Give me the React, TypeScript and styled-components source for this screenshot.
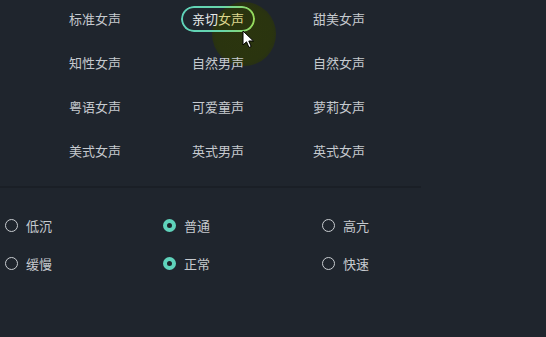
import React from 'react'
import styled, { createGlobalStyle } from 'styled-components'

const GlobalStyle = createGlobalStyle`
  html, body {
    margin: 0;
    padding: 0;
    background: #1f252d;
  }
  body {
    font-family: "Noto Sans CJK SC", "Noto Sans", sans-serif;
    -webkit-font-smoothing: antialiased;
  }
`

const Page = styled.div`
  position: relative;
  width: 546px;
  height: 337px;
  overflow: hidden;
  background: #1f252d;
`

const VoiceGrid = styled.div`
  display: grid;
  grid-template-columns: 123px 121px 122px;
  grid-auto-rows: 44px;
  padding-left: 69px;
  margin-top: -3px;
`

const VoiceCell = styled.div`
  display: flex;
  align-items: center;
`

const VoiceItem = styled.div<{ active?: boolean }>`
  position: relative;
  z-index: 1;
  font-size: 13px;
  line-height: 18px;
  color: #c6cacf;
  white-space: nowrap;
  ${p => p.active && `
    margin-left: -11px;
    padding: 4px 11px;
    color: #e6e9ea;
    &::before {
      content: '';
      position: absolute;
      inset: 0;
      border-radius: 13px;
      padding: 2px;
      background: linear-gradient(90deg, #5fd3bb, #68d6ab 55%, #98da58);
      -webkit-mask: linear-gradient(#000 0 0) content-box, linear-gradient(#000 0 0);
      -webkit-mask-composite: xor;
      mask-composite: exclude;
    }
  `}
`

const Warm = styled.span`
  color: #dcd68e;
`

const Divider = styled.div`
  width: 421px;
  height: 2px;
  margin-top: 13px;
  background: #1a1f26;
`

const RadioGrid = styled.div`
  display: grid;
  grid-template-columns: 158px 159px 160px;
  grid-auto-rows: 38px;
  padding-left: 5px;
  margin-top: 18px;
`

const RadioOption = styled.label`
  display: flex;
  align-items: center;
  gap: 8px;
  font-size: 13px;
  color: #c6cacf;
`

const RadioDot = styled.span<{ checked?: boolean }>`
  box-sizing: border-box;
  width: 13px;
  height: 13px;
  border-radius: 50%;
  border: ${p => (p.checked ? '4px solid #5fd3bb' : '1.5px solid #c9cdd1')};
  background: ${p => (p.checked ? '#1c2228' : 'transparent')};
`

const Halo = styled.div`
  position: absolute;
  left: 212px;
  top: 2px;
  width: 64px;
  height: 64px;
  border-radius: 50%;
  background: radial-gradient(circle, #2b350e 0%, #2a340f 62%, rgba(38, 46, 20, 0.8) 82%, rgba(31, 37, 45, 0) 100%);
  z-index: 0;
  pointer-events: none;
`

const Cursor = styled.svg`
  position: absolute;
  left: 242px;
  top: 30px;
  z-index: 3;
`

const voices = [
  ['标准女声', '亲切女声', '甜美女声'],
  ['知性女声', '自然男声', '自然女声'],
  ['粤语女声', '可爱童声', '萝莉女声'],
  ['美式女声', '英式男声', '英式女声']
]

const radios = [
  [
    { label: '低沉' },
    { label: '普通', checked: true },
    { label: '高亢' }
  ],
  [
    { label: '缓慢' },
    { label: '正常', checked: true },
    { label: '快速' }
  ]
]

export default function App() {
  return (
    <>
      <GlobalStyle />
      <Page>
        <Halo />
        <VoiceGrid>
          {voices.flat().map(name => (
            <VoiceCell key={name}>
              {name === '亲切女声' ? (
                <VoiceItem active>
                  亲切<Warm>女声</Warm>
                </VoiceItem>
              ) : (
                <VoiceItem>{name}</VoiceItem>
              )}
            </VoiceCell>
          ))}
        </VoiceGrid>
        <Divider />
        <RadioGrid>
          {radios.flat().map(r => (
            <RadioOption key={r.label}>
              <RadioDot checked={r.checked} />
              {r.label}
            </RadioOption>
          ))}
        </RadioGrid>
        <Cursor width="14" height="20" viewBox="0 0 14 20">
          <path
            d="M1 1 L1 15 L4.5 11.8 L7 17.5 L9.2 16.5 L6.8 11 L11.5 11 Z"
            fill="#ffffff"
            stroke="#000000"
            strokeWidth="1"
            strokeLinejoin="round"
          />
        </Cursor>
      </Page>
    </>
  )
}
